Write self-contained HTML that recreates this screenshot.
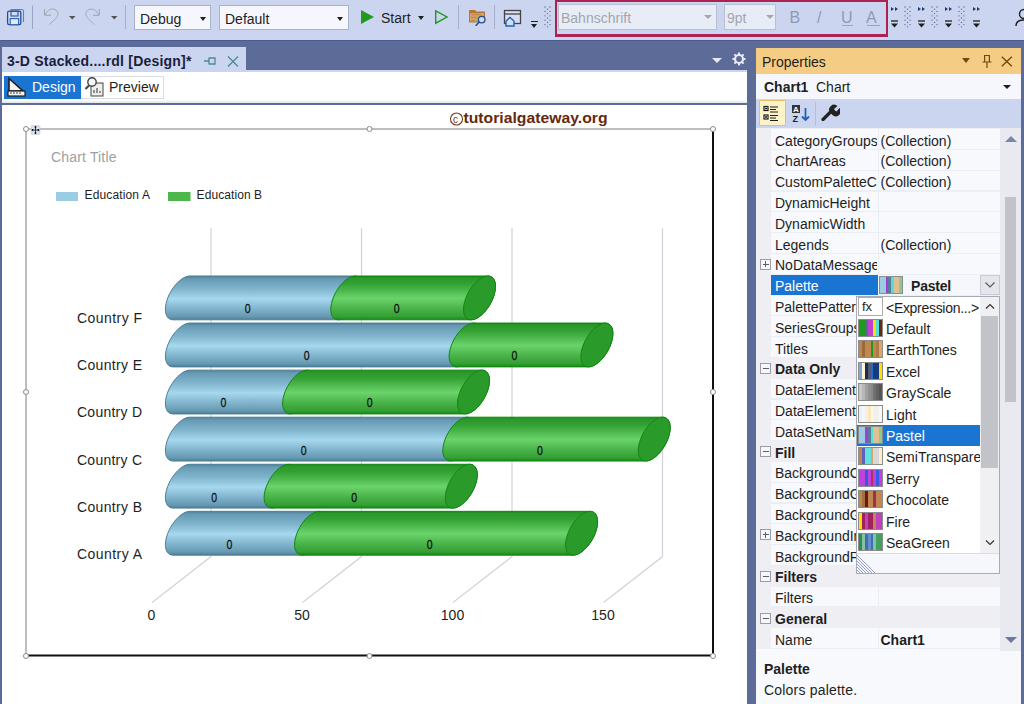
<!DOCTYPE html>
<html><head><meta charset="utf-8">
<style>
*{margin:0;padding:0;box-sizing:border-box}
html,body{width:1024px;height:704px;overflow:hidden;background:#5D6B99;font-family:"Liberation Sans",sans-serif;font-size:14px;color:#1E1E1E}
.a{position:absolute}
#tb{left:0;top:0;width:1024px;height:40px;background:#CCD5F0}
.sep{position:absolute;top:5px;width:1px;height:24px;background:#A6B0CC}
.combo{position:absolute;top:5px;height:25px;background:#F5F7FC;border:1px solid #A9B2CD}
.combo .t{position:absolute;left:5px;top:5px;font-size:14px;color:#1E1E1E}
.dd{position:absolute;width:0;height:0;border-left:4px solid transparent;border-right:4px solid transparent;border-top:4px solid #1E1E1E}
.grip{position:absolute;width:7px}
#doc{left:2px;top:70px;width:745px;height:634px;background:#fff}
#tab{left:2px;top:47px;width:244px;height:25px;background:#CCD5F0}
#props{left:756px;top:48px;width:265px;height:656px;background:#F7F9FD}
.row{position:absolute;left:15px;width:229px;height:21px;border-bottom:1px solid #E6EAF3}
.nm{position:absolute;left:4px;top:2px;font-size:14px;white-space:nowrap;overflow:hidden}
</style></head><body>
<!-- top toolbar -->
<div id="tb" class="a">
 <!-- save icon -->
 <svg class="a" style="left:0;top:0" width="130" height="40" viewBox="0 0 130 40">
  <path d="M10.5 9.5H21.5Q23.5 9.5 23.5 11.5V22" fill="none" stroke="#4F86D0" stroke-width="1.1"/>
  <rect x="7.6" y="11.2" width="13.2" height="13.5" rx="1.6" fill="#D3DBF0" stroke="#1F4E9A" stroke-width="1.3"/>
  <rect x="11" y="11.2" width="7" height="4.8" fill="none" stroke="#1F4E9A" stroke-width="1.1"/>
  <rect x="10.2" y="18.6" width="8.4" height="6.1" fill="#E4E9F5" stroke="#2A5FB0" stroke-width="1.1"/>
  <path d="M32.5 5.5V29" stroke="#9AA5C6" stroke-width="1"/>
  <path d="M44.5 9V15.2H51" fill="none" stroke="#98A0B8" stroke-width="1"/>
  <path d="M45 14.8C47 11 49.5 9 52.5 9C56 9 58 11.5 58 14.2C58 16.8 55 19.5 49.3 24.5" fill="none" stroke="#A8A59E" stroke-width="1"/>
  <path d="M69 16H75.5L72.25 19.5z" fill="#555"/>
  <path d="M99.2 9V15.3H93" fill="none" stroke="#98A0B8" stroke-width="1"/>
  <path d="M98.8 14.8C96.8 11 94.3 9 91.3 9C87.8 9 85.8 11.5 85.8 14.2C85.8 16.8 88.8 19.5 94.5 24.5" fill="none" stroke="#A0AAB0" stroke-width="1"/>
  <path d="M111 16H117.5L114.25 19.5z" fill="#555"/>
 </svg>
 <div class="sep" style="left:125px"></div>
 <div class="combo" style="left:134px;width:77px"><span class="t">Debug</span><div class="dd" style="left:64.5px;top:10.5px;border-left-width:3.5px;border-right-width:3.5px;border-top-width:4px"></div></div>
 <div class="combo" style="left:219px;width:130px"><span class="t">Default</span><div class="dd" style="left:117px;top:10.5px;border-left-width:3.5px;border-right-width:3.5px;border-top-width:4px"></div></div>
 <!-- play -->
 <svg class="a" style="left:360px;top:9px" width="15" height="16" viewBox="0 0 15 16"><path d="M1 1L14 8L1 15z" fill="#1F9A1F"/></svg>
 <span class="a" style="left:381px;top:10px;font-size:14px">Start</span>
 <div class="dd" style="left:417.5px;top:15.5px;border-left-width:3.5px;border-right-width:3.5px;border-top-width:4px"></div>
 <svg class="a" style="left:434px;top:9px" width="15" height="16" viewBox="0 0 15 16"><path d="M1.7 1.8L13 8L1.7 14.2z" fill="none" stroke="#1F9A1F" stroke-width="1.4"/></svg>
 <div class="sep" style="left:458px"></div>
 <!-- folder search -->
 <svg class="a" style="left:468px;top:8px" width="20" height="19" viewBox="0 0 20 19">
  <path d="M1 2h6l1.5 1.5H17v11H1z" fill="#B87432"/>
  <path d="M2 5h14v8.5H2z" fill="#D2A468"/>
  <path d="M3 6l2 1 2-1 2 1 2-1 2 1M3 9l2 1 2-1 2 1M3 12l2 1 2-1" stroke="#B07A40" stroke-width="0.8" fill="none"/>
  <circle cx="13.7" cy="11.6" r="3.3" fill="#D3DBF0" stroke="#1F4E9A" stroke-width="1.3"/>
  <path d="M11.3 14l-3.6 3.8" stroke="#1F4E9A" stroke-width="1.5"/>
 </svg>
 <div class="sep" style="left:494px"></div>
 <!-- window home -->
 <svg class="a" style="left:503px;top:9px" width="20" height="19" viewBox="0 0 20 19">
  <rect x="1.5" y="1.5" width="16" height="13" fill="#D6DDF2" stroke="#444" stroke-width="1.3"/>
  <path d="M1.5 5h16" stroke="#444" stroke-width="1.3"/>
  <path d="M3 12l4-3.5 4 3.5v5H3z" fill="#D6DDF2" stroke="#1F62B8" stroke-width="1.4"/>
 </svg>
 <div class="a" style="left:531px;top:20.5px;width:7px;height:1.2px;background:#1E1E1E"></div>
 <div class="dd" style="left:531px;top:23.5px;border-left-width:3.5px;border-right-width:3.5px;border-top-width:4px"></div>
 <div class="grip" style="left:544px;top:6px;height:22px"><svg width="7" height="22" viewBox="0 0 7 22" fill="#56638F"><circle cx="1" cy="1.0" r="0.65"/><circle cx="6" cy="1.0" r="0.65"/><circle cx="3.5" cy="3.2" r="0.65"/><circle cx="1" cy="5.4" r="0.65"/><circle cx="6" cy="5.4" r="0.65"/><circle cx="3.5" cy="7.6" r="0.65"/><circle cx="1" cy="9.8" r="0.65"/><circle cx="6" cy="9.8" r="0.65"/><circle cx="3.5" cy="12.0" r="0.65"/><circle cx="1" cy="14.2" r="0.65"/><circle cx="6" cy="14.2" r="0.65"/><circle cx="3.5" cy="16.4" r="0.65"/><circle cx="1" cy="18.6" r="0.65"/><circle cx="6" cy="18.6" r="0.65"/><circle cx="3.5" cy="20.8" r="0.65"/></svg></div>
 <!-- red box -->
 <div class="a" style="left:555px;top:0;width:333px;height:37px;border:2.8px solid #AC2352;border-bottom-width:3px"></div>
 <div class="combo" style="left:558px;top:4px;height:26px;width:159px;border-color:#B9BFCF;background:#E8ECF6"><span class="t" style="left:2px;color:#A3A6AE">Bahnschrift</span><div class="dd" style="left:145px;top:10px;border-top-color:#A3A6AE"></div></div>
 <div class="combo" style="left:724px;top:4px;height:26px;width:52px;border-color:#B9BFCF;background:#E8ECF6"><span class="t" style="left:2px;color:#A3A6AE">9pt</span><div class="dd" style="left:41px;top:10px;border-top-color:#A3A6AE"></div></div>

 <!-- alignment groups -->
 <svg class="a" style="left:888px;top:4px" width="100" height="26" viewBox="0 0 100 26">
  <g id="ag">
   <path d="M3 3l3 2-3 2zM7 3l3 2-3 2z" fill="#1E3A7A"/>
   <path d="M3 17h7" stroke="#1E1E1E" stroke-width="1.3"/>
   <path d="M3 19.5h7l-3.5 4z" fill="#1E1E1E"/>
  </g>
  <use href="#ag" x="27"/><use href="#ag" x="54"/><use href="#ag" x="82"/>
 </svg>
 <div class="grip" style="left:904px;top:6px;height:22px"><svg width="7" height="22" viewBox="0 0 7 22" fill="#56638F"><circle cx="1" cy="1.0" r="0.65"/><circle cx="6" cy="1.0" r="0.65"/><circle cx="3.5" cy="3.2" r="0.65"/><circle cx="1" cy="5.4" r="0.65"/><circle cx="6" cy="5.4" r="0.65"/><circle cx="3.5" cy="7.6" r="0.65"/><circle cx="1" cy="9.8" r="0.65"/><circle cx="6" cy="9.8" r="0.65"/><circle cx="3.5" cy="12.0" r="0.65"/><circle cx="1" cy="14.2" r="0.65"/><circle cx="6" cy="14.2" r="0.65"/><circle cx="3.5" cy="16.4" r="0.65"/><circle cx="1" cy="18.6" r="0.65"/><circle cx="6" cy="18.6" r="0.65"/><circle cx="3.5" cy="20.8" r="0.65"/></svg></div>
 <div class="grip" style="left:931px;top:6px;height:22px"><svg width="7" height="22" viewBox="0 0 7 22" fill="#56638F"><circle cx="1" cy="1.0" r="0.65"/><circle cx="6" cy="1.0" r="0.65"/><circle cx="3.5" cy="3.2" r="0.65"/><circle cx="1" cy="5.4" r="0.65"/><circle cx="6" cy="5.4" r="0.65"/><circle cx="3.5" cy="7.6" r="0.65"/><circle cx="1" cy="9.8" r="0.65"/><circle cx="6" cy="9.8" r="0.65"/><circle cx="3.5" cy="12.0" r="0.65"/><circle cx="1" cy="14.2" r="0.65"/><circle cx="6" cy="14.2" r="0.65"/><circle cx="3.5" cy="16.4" r="0.65"/><circle cx="1" cy="18.6" r="0.65"/><circle cx="6" cy="18.6" r="0.65"/><circle cx="3.5" cy="20.8" r="0.65"/></svg></div>
 <div class="grip" style="left:958px;top:6px;height:22px"><svg width="7" height="22" viewBox="0 0 7 22" fill="#56638F"><circle cx="1" cy="1.0" r="0.65"/><circle cx="6" cy="1.0" r="0.65"/><circle cx="3.5" cy="3.2" r="0.65"/><circle cx="1" cy="5.4" r="0.65"/><circle cx="6" cy="5.4" r="0.65"/><circle cx="3.5" cy="7.6" r="0.65"/><circle cx="1" cy="9.8" r="0.65"/><circle cx="6" cy="9.8" r="0.65"/><circle cx="3.5" cy="12.0" r="0.65"/><circle cx="1" cy="14.2" r="0.65"/><circle cx="6" cy="14.2" r="0.65"/><circle cx="3.5" cy="16.4" r="0.65"/><circle cx="1" cy="18.6" r="0.65"/><circle cx="6" cy="18.6" r="0.65"/><circle cx="3.5" cy="20.8" r="0.65"/></svg></div>
 <svg class="a" style="left:1014px;top:8px" width="10" height="20" viewBox="0 0 10 20">
  <circle cx="10" cy="6" r="4.5" fill="none" stroke="#1E1E1E" stroke-width="1.4"/>
  <path d="M2 18c0-4 3-6 8-6" fill="none" stroke="#1E1E1E" stroke-width="1.4"/>
 </svg>
 <span class="a" style="left:789.5px;top:9px;font-size:16px;color:#8E9AB5">B</span>
 <span class="a" style="left:817px;top:9px;font-size:16px;color:#8E9AB5">/</span>
 <span class="a" style="left:841px;top:9px;font-size:16px;color:#8E9AB5">U</span>
 <div class="a" style="left:841.5px;top:24.5px;width:11px;height:1.2px;background:#9AA4BC"></div>
 <span class="a" style="left:866px;top:9px;font-size:16px;color:#8E9AB5">A</span>
 <div class="a" style="left:866.5px;top:24.5px;width:13px;height:1.2px;background:#9AA4BC"></div>
</div>
</div>
<div class="a" style="left:0;top:40px;width:1024px;height:1px;background:#4B5A8E"></div>
<!-- doc tab -->
<div id="tab" class="a">
 <span class="a" style="left:5px;top:5.5px;font-size:14px;font-weight:bold;color:#1B1E3C;letter-spacing:0.2px;white-space:nowrap">3-D Stacked....rdl [Design]*</span>
 <svg class="a" style="left:201px;top:56px;top:9px" width="14" height="10" viewBox="0 0 14 10">
  <path d="M1 5h5M6 1.5v7M6 2h6v6H6" fill="none" stroke="#4A8A96" stroke-width="1.3"/>
 </svg>
 <svg class="a" style="left:224.5px;top:8.5px" width="12" height="11" viewBox="0 0 12 11"><path d="M1 0.5l10 10M11 0.5l-10 10" stroke="#4A8A96" stroke-width="1.3"/></svg>
</div>
<!-- tab well icons -->
<div class="a" style="left:712px;top:58px;width:0;height:0;border-left:5px solid transparent;border-right:5px solid transparent;border-top:5px solid #E6EAF6"></div>
<svg class="a" style="left:732px;top:52px" width="14" height="14" viewBox="0 0 14 14">
 <circle cx="7" cy="7" r="4" fill="none" stroke="#E6EAF6" stroke-width="2.2"/>
 <path d="M7 0.5v3M7 10.5v3M0.5 7h3M10.5 7h3M2.4 2.4l2.1 2.1M9.5 9.5l2.1 2.1M2.4 11.6l2.1-2.1M9.5 4.5l2.1-2.1" stroke="#E6EAF6" stroke-width="2"/>
</svg>
<div id="doc" class="a">
 <div class="a" style="left:0;top:0;width:745px;height:2px;background:#CCD5F0"></div>
 <!-- design button -->
 <div class="a" style="left:2px;top:5.5px;width:77px;height:23px;background:#1A74D2"></div>
 <svg class="a" style="left:5px;top:7px" width="20" height="20" viewBox="0 0 20 20">
  <path d="M2 1.5L16 14H2z" fill="#F3F3F3" stroke="#1E1E1E" stroke-width="1.6"/>
  <rect x="1" y="14" width="17" height="5" fill="#F3F3F3" stroke="#1E1E1E" stroke-width="1.2"/>
  <path d="M4 15v2M7 15v2M10 15v2M13 15v2" stroke="#1E1E1E" stroke-width="0.8"/>
 </svg>
 <span class="a" style="left:30px;top:9px;font-size:14px;color:#fff">Design</span>
 <div class="a" style="left:79px;top:5.5px;width:83px;height:23px;background:#fff;border:1px solid #D7DCE8;border-left:none"></div>
 <svg class="a" style="left:82px;top:6px" width="21" height="21" viewBox="0 0 21 21">
  <rect x="7" y="7" width="12" height="13" fill="#EDEDED" stroke="#555" stroke-width="1.1"/>
  <path d="M10 17v-3M13 17v-5M16 17v-2" stroke="#333" stroke-width="1"/>
  <circle cx="8" cy="6" r="4.2" fill="#F5F5F5" stroke="#444" stroke-width="1.4"/>
  <path d="M5 9.5l-3.5 3.5" stroke="#444" stroke-width="2.2"/>
 </svg>
 <span class="a" style="left:107px;top:9px;font-size:14px;color:#1E1E1E">Preview</span>
 <div class="a" style="left:0;top:29.5px;width:745px;height:3.3px;background:linear-gradient(#fff,#E0E3EA)"></div>
 <div class="a" style="left:0;top:32.8px;width:745px;height:2.4px;background:#5D6B99"></div>
</div>
<!--CHART-->
<svg class="a" style="left:0;top:0" width="747" height="704" viewBox="0 0 747 704">
<defs>
<linearGradient id="gb0" gradientUnits="userSpaceOnUse" x1="0" y1="276.00" x2="0" y2="319.80"><stop offset="0" stop-color="#4C7F96"/><stop offset="0.06" stop-color="#679AB2"/><stop offset="0.3" stop-color="#80B5CD"/><stop offset="0.52" stop-color="#A6D8EE"/><stop offset="0.75" stop-color="#80B4CC"/><stop offset="0.93" stop-color="#6699B1"/><stop offset="1" stop-color="#4C7F96"/></linearGradient>
<linearGradient id="gg0" gradientUnits="userSpaceOnUse" x1="0" y1="276.00" x2="0" y2="319.80"><stop offset="0" stop-color="#168C16"/><stop offset="0.05" stop-color="#2C982C"/><stop offset="0.17" stop-color="#33A033"/><stop offset="0.32" stop-color="#4AB64A"/><stop offset="0.51" stop-color="#6AD46A"/><stop offset="0.6" stop-color="#5EC85E"/><stop offset="0.77" stop-color="#46B046"/><stop offset="0.92" stop-color="#35A035"/><stop offset="1" stop-color="#168C16"/></linearGradient>
<linearGradient id="gb1" gradientUnits="userSpaceOnUse" x1="0" y1="323.07" x2="0" y2="366.87"><stop offset="0" stop-color="#4C7F96"/><stop offset="0.06" stop-color="#679AB2"/><stop offset="0.3" stop-color="#80B5CD"/><stop offset="0.52" stop-color="#A6D8EE"/><stop offset="0.75" stop-color="#80B4CC"/><stop offset="0.93" stop-color="#6699B1"/><stop offset="1" stop-color="#4C7F96"/></linearGradient>
<linearGradient id="gg1" gradientUnits="userSpaceOnUse" x1="0" y1="323.07" x2="0" y2="366.87"><stop offset="0" stop-color="#168C16"/><stop offset="0.05" stop-color="#2C982C"/><stop offset="0.17" stop-color="#33A033"/><stop offset="0.32" stop-color="#4AB64A"/><stop offset="0.51" stop-color="#6AD46A"/><stop offset="0.6" stop-color="#5EC85E"/><stop offset="0.77" stop-color="#46B046"/><stop offset="0.92" stop-color="#35A035"/><stop offset="1" stop-color="#168C16"/></linearGradient>
<linearGradient id="gb2" gradientUnits="userSpaceOnUse" x1="0" y1="370.14" x2="0" y2="413.94"><stop offset="0" stop-color="#4C7F96"/><stop offset="0.06" stop-color="#679AB2"/><stop offset="0.3" stop-color="#80B5CD"/><stop offset="0.52" stop-color="#A6D8EE"/><stop offset="0.75" stop-color="#80B4CC"/><stop offset="0.93" stop-color="#6699B1"/><stop offset="1" stop-color="#4C7F96"/></linearGradient>
<linearGradient id="gg2" gradientUnits="userSpaceOnUse" x1="0" y1="370.14" x2="0" y2="413.94"><stop offset="0" stop-color="#168C16"/><stop offset="0.05" stop-color="#2C982C"/><stop offset="0.17" stop-color="#33A033"/><stop offset="0.32" stop-color="#4AB64A"/><stop offset="0.51" stop-color="#6AD46A"/><stop offset="0.6" stop-color="#5EC85E"/><stop offset="0.77" stop-color="#46B046"/><stop offset="0.92" stop-color="#35A035"/><stop offset="1" stop-color="#168C16"/></linearGradient>
<linearGradient id="gb3" gradientUnits="userSpaceOnUse" x1="0" y1="417.21" x2="0" y2="461.01"><stop offset="0" stop-color="#4C7F96"/><stop offset="0.06" stop-color="#679AB2"/><stop offset="0.3" stop-color="#80B5CD"/><stop offset="0.52" stop-color="#A6D8EE"/><stop offset="0.75" stop-color="#80B4CC"/><stop offset="0.93" stop-color="#6699B1"/><stop offset="1" stop-color="#4C7F96"/></linearGradient>
<linearGradient id="gg3" gradientUnits="userSpaceOnUse" x1="0" y1="417.21" x2="0" y2="461.01"><stop offset="0" stop-color="#168C16"/><stop offset="0.05" stop-color="#2C982C"/><stop offset="0.17" stop-color="#33A033"/><stop offset="0.32" stop-color="#4AB64A"/><stop offset="0.51" stop-color="#6AD46A"/><stop offset="0.6" stop-color="#5EC85E"/><stop offset="0.77" stop-color="#46B046"/><stop offset="0.92" stop-color="#35A035"/><stop offset="1" stop-color="#168C16"/></linearGradient>
<linearGradient id="gb4" gradientUnits="userSpaceOnUse" x1="0" y1="464.28" x2="0" y2="508.08"><stop offset="0" stop-color="#4C7F96"/><stop offset="0.06" stop-color="#679AB2"/><stop offset="0.3" stop-color="#80B5CD"/><stop offset="0.52" stop-color="#A6D8EE"/><stop offset="0.75" stop-color="#80B4CC"/><stop offset="0.93" stop-color="#6699B1"/><stop offset="1" stop-color="#4C7F96"/></linearGradient>
<linearGradient id="gg4" gradientUnits="userSpaceOnUse" x1="0" y1="464.28" x2="0" y2="508.08"><stop offset="0" stop-color="#168C16"/><stop offset="0.05" stop-color="#2C982C"/><stop offset="0.17" stop-color="#33A033"/><stop offset="0.32" stop-color="#4AB64A"/><stop offset="0.51" stop-color="#6AD46A"/><stop offset="0.6" stop-color="#5EC85E"/><stop offset="0.77" stop-color="#46B046"/><stop offset="0.92" stop-color="#35A035"/><stop offset="1" stop-color="#168C16"/></linearGradient>
<linearGradient id="gb5" gradientUnits="userSpaceOnUse" x1="0" y1="511.35" x2="0" y2="555.15"><stop offset="0" stop-color="#4C7F96"/><stop offset="0.06" stop-color="#679AB2"/><stop offset="0.3" stop-color="#80B5CD"/><stop offset="0.52" stop-color="#A6D8EE"/><stop offset="0.75" stop-color="#80B4CC"/><stop offset="0.93" stop-color="#6699B1"/><stop offset="1" stop-color="#4C7F96"/></linearGradient>
<linearGradient id="gg5" gradientUnits="userSpaceOnUse" x1="0" y1="511.35" x2="0" y2="555.15"><stop offset="0" stop-color="#168C16"/><stop offset="0.05" stop-color="#2C982C"/><stop offset="0.17" stop-color="#33A033"/><stop offset="0.32" stop-color="#4AB64A"/><stop offset="0.51" stop-color="#6AD46A"/><stop offset="0.6" stop-color="#5EC85E"/><stop offset="0.77" stop-color="#46B046"/><stop offset="0.92" stop-color="#35A035"/><stop offset="1" stop-color="#168C16"/></linearGradient>
</defs>
<path d="M26 129H713M26 129V656" stroke="#A9A9A9" stroke-width="1.5" fill="none"/>
<path d="M713 130V656M26 655.5H714" stroke="#111" stroke-width="2" fill="none"/>
<circle cx="456.5" cy="119" r="6" fill="none" stroke="#7A3A1A" stroke-width="1.1"/><text x="453" y="123" font-family="Liberation Sans" font-size="10" fill="#7A3A1A">c</text>
<text x="463.5" y="123.3" font-family="Liberation Sans" font-weight="bold" font-size="14.5" fill="#66280C" textLength="144" lengthAdjust="spacingAndGlyphs">tutorialgateway.org</text>
<text x="51" y="162.3" font-family="Liberation Sans" font-size="14" fill="#A0A0A0" textLength="65.5" lengthAdjust="spacing">Chart Title</text>
<rect x="56" y="192" width="22" height="9" fill="#9ACDE3"/><rect x="168" y="192" width="22.5" height="9" fill="#4CB84C"/>
<text x="84.5" y="199.3" font-family="Liberation Sans" font-size="12" fill="#1E1E1E" textLength="65.5" lengthAdjust="spacing">Education A</text>
<text x="196.6" y="199.3" font-family="Liberation Sans" font-size="12" fill="#1E1E1E" textLength="65.5" lengthAdjust="spacing">Education B</text>
<path d="M211.0 228V556.6L152.0 602.5" stroke="#D4D4DC" stroke-width="1.3" fill="none"/>
<text x="151.5" y="619.7" text-anchor="middle" font-family="Liberation Sans" font-size="14" fill="#1E1E1E">0</text>
<path d="M361.5 228V556.6L302.5 602.5" stroke="#D4D4DC" stroke-width="1.3" fill="none"/>
<text x="302.0" y="619.7" text-anchor="middle" font-family="Liberation Sans" font-size="14" fill="#1E1E1E">50</text>
<path d="M512.0 228V556.6L453.0 602.5" stroke="#D4D4DC" stroke-width="1.3" fill="none"/>
<text x="452.5" y="619.7" text-anchor="middle" font-family="Liberation Sans" font-size="14" fill="#1E1E1E">100</text>
<path d="M662.5 228V556.6L603.5 602.5" stroke="#D4D4DC" stroke-width="1.3" fill="none"/>
<text x="603.0" y="619.7" text-anchor="middle" font-family="Liberation Sans" font-size="14" fill="#1E1E1E">150</text>
<path d="M189.80 275.99 L355.20 275.99 L356.90 276.18 L358.44 276.74 L359.77 277.66 L360.88 278.92 L361.75 280.52 L362.37 282.41 L362.72 284.56 L362.79 286.94 L362.60 289.52 L362.13 292.23 L361.40 295.04 L360.42 297.90 L359.21 300.76 L357.78 303.57 L356.17 306.28 L354.40 308.86 L352.49 311.24 L350.49 313.39 L348.43 315.28 L346.34 316.88 L344.25 318.14 L342.21 319.06 L340.25 319.62 L338.40 319.81 L173.00 319.81 L171.30 319.62 L169.76 319.06 L168.43 318.14 L167.32 316.88 L166.45 315.28 L165.83 313.39 L165.48 311.24 L165.41 308.86 L165.60 306.28 L166.07 303.57 L166.80 300.76 L167.78 297.90 L168.99 295.04 L170.42 292.23 L172.03 289.52 L173.80 286.94 L175.71 284.56 L177.71 282.41 L179.77 280.52 L181.86 278.92 L183.95 277.66 L185.99 276.74 L187.95 276.18 L189.80 275.99 Z" fill="url(#gb0)" stroke="#4C7F96" stroke-width="1"/>
<path d="M355.20 275.99 L487.90 275.99 L489.60 276.18 L491.14 276.74 L492.47 277.66 L493.58 278.92 L494.45 280.52 L495.07 282.41 L495.42 284.56 L495.49 286.94 L495.30 289.52 L494.83 292.23 L494.10 295.04 L493.12 297.90 L491.91 300.76 L490.48 303.57 L488.87 306.28 L487.10 308.86 L485.19 311.24 L483.19 313.39 L481.13 315.28 L479.04 316.88 L476.95 318.14 L474.91 319.06 L472.95 319.62 L471.10 319.81 L338.40 319.81 L336.70 319.62 L335.16 319.06 L333.83 318.14 L332.72 316.88 L331.85 315.28 L331.23 313.39 L330.88 311.24 L330.81 308.86 L331.00 306.28 L331.47 303.57 L332.20 300.76 L333.18 297.90 L334.39 295.04 L335.82 292.23 L337.43 289.52 L339.20 286.94 L341.11 284.56 L343.11 282.41 L345.17 280.52 L347.26 278.92 L349.35 277.66 L351.39 276.74 L353.35 276.18 L355.20 275.99 Z" fill="url(#gg0)" stroke="#0E880E" stroke-width="1"/>
<path d="M479.50 316.55 L481.59 314.89 L483.64 312.94 L485.62 310.73 L487.50 308.30 L489.24 305.70 L490.81 302.96 L492.19 300.13 L493.36 297.27 L494.28 294.41 L494.95 291.62 L495.36 288.93 L495.50 286.40 L495.36 284.06 L494.95 281.96 L494.28 280.14 L493.36 278.62 L492.19 277.42 L490.81 276.58 L489.24 276.10 L487.50 276.00 L485.62 276.27 L483.64 276.91 L481.59 277.91 L479.50 279.25 L477.41 280.91 L475.36 282.86 L473.38 285.07 L471.50 287.50 L469.76 290.10 L468.19 292.84 L466.81 295.67 L465.64 298.53 L464.72 301.39 L464.05 304.18 L463.64 306.87 L463.50 309.40 L463.64 311.74 L464.05 313.84 L464.72 315.66 L465.64 317.18 L466.81 318.38 L468.19 319.22 L469.76 319.70 L471.50 319.80 L473.38 319.53 L475.36 318.89 L477.41 317.89 Z" fill="#2A9A2A" stroke="#0E880E" stroke-width="1"/>
<text x="247.6" y="313.4" text-anchor="middle" font-family="Liberation Sans" font-size="13.5" fill="#111" stroke="#111" stroke-width="0.3" transform="translate(247.6 0) scale(0.78 1) translate(-247.6 0)">0</text>
<text x="396.6" y="313.4" text-anchor="middle" font-family="Liberation Sans" font-size="13.5" fill="#111" stroke="#111" stroke-width="0.3" transform="translate(396.6 0) scale(0.78 1) translate(-396.6 0)">0</text>
<text x="77" y="323.3" font-family="Liberation Sans" font-size="14" fill="#1E1E1E" textLength="65" lengthAdjust="spacing">Country F</text>
<path d="M189.80 323.06 L473.50 323.06 L475.20 323.25 L476.74 323.81 L478.07 324.73 L479.18 325.99 L480.05 327.59 L480.67 329.48 L481.02 331.63 L481.09 334.01 L480.90 336.59 L480.43 339.30 L479.70 342.11 L478.72 344.97 L477.51 347.83 L476.08 350.64 L474.47 353.35 L472.70 355.93 L470.79 358.31 L468.79 360.46 L466.73 362.35 L464.64 363.95 L462.55 365.21 L460.51 366.13 L458.55 366.69 L456.70 366.88 L173.00 366.88 L171.30 366.69 L169.76 366.13 L168.43 365.21 L167.32 363.95 L166.45 362.35 L165.83 360.46 L165.48 358.31 L165.41 355.93 L165.60 353.35 L166.07 350.64 L166.80 347.83 L167.78 344.97 L168.99 342.11 L170.42 339.30 L172.03 336.59 L173.80 334.01 L175.71 331.63 L177.71 329.48 L179.77 327.59 L181.86 325.99 L183.95 324.73 L185.99 323.81 L187.95 323.25 L189.80 323.06 Z" fill="url(#gb1)" stroke="#4C7F96" stroke-width="1"/>
<path d="M473.50 323.06 L605.30 323.06 L607.00 323.25 L608.54 323.81 L609.87 324.73 L610.98 325.99 L611.85 327.59 L612.47 329.48 L612.82 331.63 L612.89 334.01 L612.70 336.59 L612.23 339.30 L611.50 342.11 L610.52 344.97 L609.31 347.83 L607.88 350.64 L606.27 353.35 L604.50 355.93 L602.59 358.31 L600.59 360.46 L598.53 362.35 L596.44 363.95 L594.35 365.21 L592.31 366.13 L590.35 366.69 L588.50 366.88 L456.70 366.88 L455.00 366.69 L453.46 366.13 L452.13 365.21 L451.02 363.95 L450.15 362.35 L449.53 360.46 L449.18 358.31 L449.11 355.93 L449.30 353.35 L449.77 350.64 L450.50 347.83 L451.48 344.97 L452.69 342.11 L454.12 339.30 L455.73 336.59 L457.50 334.01 L459.41 331.63 L461.41 329.48 L463.47 327.59 L465.56 325.99 L467.65 324.73 L469.69 323.81 L471.65 323.25 L473.50 323.06 Z" fill="url(#gg1)" stroke="#0E880E" stroke-width="1"/>
<path d="M596.90 363.62 L598.99 361.96 L601.04 360.01 L603.02 357.80 L604.90 355.37 L606.64 352.77 L608.21 350.03 L609.59 347.20 L610.76 344.34 L611.68 341.48 L612.35 338.69 L612.76 336.00 L612.90 333.47 L612.76 331.13 L612.35 329.03 L611.68 327.21 L610.76 325.69 L609.59 324.49 L608.21 323.65 L606.64 323.17 L604.90 323.07 L603.02 323.34 L601.04 323.98 L598.99 324.98 L596.90 326.32 L594.81 327.98 L592.76 329.93 L590.78 332.14 L588.90 334.57 L587.16 337.17 L585.59 339.91 L584.21 342.74 L583.04 345.60 L582.12 348.46 L581.45 351.25 L581.04 353.94 L580.90 356.47 L581.04 358.81 L581.45 360.91 L582.12 362.73 L583.04 364.25 L584.21 365.45 L585.59 366.29 L587.16 366.77 L588.90 366.87 L590.78 366.60 L592.76 365.96 L594.81 364.96 Z" fill="#2A9A2A" stroke="#0E880E" stroke-width="1"/>
<text x="306.8" y="360.5" text-anchor="middle" font-family="Liberation Sans" font-size="13.5" fill="#111" stroke="#111" stroke-width="0.3" transform="translate(306.8 0) scale(0.78 1) translate(-306.8 0)">0</text>
<text x="514.5" y="360.5" text-anchor="middle" font-family="Liberation Sans" font-size="13.5" fill="#111" stroke="#111" stroke-width="0.3" transform="translate(514.5 0) scale(0.78 1) translate(-514.5 0)">0</text>
<text x="77" y="370.4" font-family="Liberation Sans" font-size="14" fill="#1E1E1E" textLength="65" lengthAdjust="spacing">Country E</text>
<path d="M189.80 370.13 L307.00 370.13 L308.70 370.32 L310.24 370.88 L311.57 371.80 L312.68 373.06 L313.55 374.66 L314.17 376.55 L314.52 378.70 L314.59 381.08 L314.40 383.66 L313.93 386.37 L313.20 389.18 L312.22 392.04 L311.01 394.90 L309.58 397.71 L307.97 400.42 L306.20 403.00 L304.29 405.38 L302.29 407.53 L300.23 409.42 L298.14 411.02 L296.05 412.28 L294.01 413.20 L292.05 413.76 L290.20 413.95 L173.00 413.95 L171.30 413.76 L169.76 413.20 L168.43 412.28 L167.32 411.02 L166.45 409.42 L165.83 407.53 L165.48 405.38 L165.41 403.00 L165.60 400.42 L166.07 397.71 L166.80 394.90 L167.78 392.04 L168.99 389.18 L170.42 386.37 L172.03 383.66 L173.80 381.08 L175.71 378.70 L177.71 376.55 L179.77 374.66 L181.86 373.06 L183.95 371.80 L185.99 370.88 L187.95 370.32 L189.80 370.13 Z" fill="url(#gb2)" stroke="#4C7F96" stroke-width="1"/>
<path d="M307.00 370.13 L481.90 370.13 L483.60 370.32 L485.14 370.88 L486.47 371.80 L487.58 373.06 L488.45 374.66 L489.07 376.55 L489.42 378.70 L489.49 381.08 L489.30 383.66 L488.83 386.37 L488.10 389.18 L487.12 392.04 L485.91 394.90 L484.48 397.71 L482.87 400.42 L481.10 403.00 L479.19 405.38 L477.19 407.53 L475.13 409.42 L473.04 411.02 L470.95 412.28 L468.91 413.20 L466.95 413.76 L465.10 413.95 L290.20 413.95 L288.50 413.76 L286.96 413.20 L285.63 412.28 L284.52 411.02 L283.65 409.42 L283.03 407.53 L282.68 405.38 L282.61 403.00 L282.80 400.42 L283.27 397.71 L284.00 394.90 L284.98 392.04 L286.19 389.18 L287.62 386.37 L289.23 383.66 L291.00 381.08 L292.91 378.70 L294.91 376.55 L296.97 374.66 L299.06 373.06 L301.15 371.80 L303.19 370.88 L305.15 370.32 L307.00 370.13 Z" fill="url(#gg2)" stroke="#0E880E" stroke-width="1"/>
<path d="M473.50 410.69 L475.59 409.03 L477.64 407.08 L479.62 404.87 L481.50 402.44 L483.24 399.84 L484.81 397.10 L486.19 394.27 L487.36 391.41 L488.28 388.55 L488.95 385.76 L489.36 383.07 L489.50 380.54 L489.36 378.20 L488.95 376.10 L488.28 374.28 L487.36 372.76 L486.19 371.56 L484.81 370.72 L483.24 370.24 L481.50 370.14 L479.62 370.41 L477.64 371.05 L475.59 372.05 L473.50 373.39 L471.41 375.05 L469.36 377.00 L467.38 379.21 L465.50 381.64 L463.76 384.24 L462.19 386.98 L460.81 389.81 L459.64 392.67 L458.72 395.53 L458.05 398.32 L457.64 401.01 L457.50 403.54 L457.64 405.88 L458.05 407.98 L458.72 409.80 L459.64 411.32 L460.81 412.52 L462.19 413.36 L463.76 413.84 L465.50 413.94 L467.38 413.67 L469.36 413.03 L471.41 412.03 Z" fill="#2A9A2A" stroke="#0E880E" stroke-width="1"/>
<text x="223.5" y="407.5" text-anchor="middle" font-family="Liberation Sans" font-size="13.5" fill="#111" stroke="#111" stroke-width="0.3" transform="translate(223.5 0) scale(0.78 1) translate(-223.5 0)">0</text>
<text x="369.6" y="407.5" text-anchor="middle" font-family="Liberation Sans" font-size="13.5" fill="#111" stroke="#111" stroke-width="0.3" transform="translate(369.6 0) scale(0.78 1) translate(-369.6 0)">0</text>
<text x="77" y="417.4" font-family="Liberation Sans" font-size="14" fill="#1E1E1E" textLength="65" lengthAdjust="spacing">Country D</text>
<path d="M189.80 417.20 L467.20 417.20 L468.90 417.39 L470.44 417.95 L471.77 418.87 L472.88 420.13 L473.75 421.73 L474.37 423.62 L474.72 425.77 L474.79 428.15 L474.60 430.73 L474.13 433.44 L473.40 436.25 L472.42 439.11 L471.21 441.97 L469.78 444.78 L468.17 447.49 L466.40 450.07 L464.49 452.45 L462.49 454.60 L460.43 456.49 L458.34 458.09 L456.25 459.35 L454.21 460.27 L452.25 460.83 L450.40 461.02 L173.00 461.02 L171.30 460.83 L169.76 460.27 L168.43 459.35 L167.32 458.09 L166.45 456.49 L165.83 454.60 L165.48 452.45 L165.41 450.07 L165.60 447.49 L166.07 444.78 L166.80 441.97 L167.78 439.11 L168.99 436.25 L170.42 433.44 L172.03 430.73 L173.80 428.15 L175.71 425.77 L177.71 423.62 L179.77 421.73 L181.86 420.13 L183.95 418.87 L185.99 417.95 L187.95 417.39 L189.80 417.20 Z" fill="url(#gb3)" stroke="#4C7F96" stroke-width="1"/>
<path d="M467.20 417.20 L662.60 417.20 L664.30 417.39 L665.84 417.95 L667.17 418.87 L668.28 420.13 L669.15 421.73 L669.77 423.62 L670.12 425.77 L670.19 428.15 L670.00 430.73 L669.53 433.44 L668.80 436.25 L667.82 439.11 L666.61 441.97 L665.18 444.78 L663.57 447.49 L661.80 450.07 L659.89 452.45 L657.89 454.60 L655.83 456.49 L653.74 458.09 L651.65 459.35 L649.61 460.27 L647.65 460.83 L645.80 461.02 L450.40 461.02 L448.70 460.83 L447.16 460.27 L445.83 459.35 L444.72 458.09 L443.85 456.49 L443.23 454.60 L442.88 452.45 L442.81 450.07 L443.00 447.49 L443.47 444.78 L444.20 441.97 L445.18 439.11 L446.39 436.25 L447.82 433.44 L449.43 430.73 L451.20 428.15 L453.11 425.77 L455.11 423.62 L457.17 421.73 L459.26 420.13 L461.35 418.87 L463.39 417.95 L465.35 417.39 L467.20 417.20 Z" fill="url(#gg3)" stroke="#0E880E" stroke-width="1"/>
<path d="M654.20 457.76 L656.29 456.10 L658.34 454.15 L660.32 451.94 L662.20 449.51 L663.94 446.91 L665.51 444.17 L666.89 441.34 L668.06 438.48 L668.98 435.62 L669.65 432.83 L670.06 430.14 L670.20 427.61 L670.06 425.27 L669.65 423.17 L668.98 421.35 L668.06 419.83 L666.89 418.63 L665.51 417.79 L663.94 417.31 L662.20 417.21 L660.32 417.48 L658.34 418.12 L656.29 419.12 L654.20 420.46 L652.11 422.12 L650.06 424.07 L648.08 426.28 L646.20 428.71 L644.46 431.31 L642.89 434.05 L641.51 436.88 L640.34 439.74 L639.42 442.60 L638.75 445.39 L638.34 448.08 L638.20 450.61 L638.34 452.95 L638.75 455.05 L639.42 456.87 L640.34 458.39 L641.51 459.59 L642.89 460.43 L644.46 460.91 L646.20 461.01 L648.08 460.74 L650.06 460.10 L652.11 459.10 Z" fill="#2A9A2A" stroke="#0E880E" stroke-width="1"/>
<text x="303.6" y="454.6" text-anchor="middle" font-family="Liberation Sans" font-size="13.5" fill="#111" stroke="#111" stroke-width="0.3" transform="translate(303.6 0) scale(0.78 1) translate(-303.6 0)">0</text>
<text x="540.0" y="454.6" text-anchor="middle" font-family="Liberation Sans" font-size="13.5" fill="#111" stroke="#111" stroke-width="0.3" transform="translate(540.0 0) scale(0.78 1) translate(-540.0 0)">0</text>
<text x="77" y="464.5" font-family="Liberation Sans" font-size="14" fill="#1E1E1E" textLength="65" lengthAdjust="spacing">Country C</text>
<path d="M189.80 464.27 L288.50 464.27 L290.20 464.46 L291.74 465.02 L293.07 465.94 L294.18 467.20 L295.05 468.80 L295.67 470.69 L296.02 472.84 L296.09 475.22 L295.90 477.80 L295.43 480.51 L294.70 483.32 L293.72 486.18 L292.51 489.04 L291.08 491.85 L289.47 494.56 L287.70 497.14 L285.79 499.52 L283.79 501.67 L281.73 503.56 L279.64 505.16 L277.55 506.42 L275.51 507.34 L273.55 507.90 L271.70 508.09 L173.00 508.09 L171.30 507.90 L169.76 507.34 L168.43 506.42 L167.32 505.16 L166.45 503.56 L165.83 501.67 L165.48 499.52 L165.41 497.14 L165.60 494.56 L166.07 491.85 L166.80 489.04 L167.78 486.18 L168.99 483.32 L170.42 480.51 L172.03 477.80 L173.80 475.22 L175.71 472.84 L177.71 470.69 L179.77 468.80 L181.86 467.20 L183.95 465.94 L185.99 465.02 L187.95 464.46 L189.80 464.27 Z" fill="url(#gb4)" stroke="#4C7F96" stroke-width="1"/>
<path d="M288.50 464.27 L469.70 464.27 L471.40 464.46 L472.94 465.02 L474.27 465.94 L475.38 467.20 L476.25 468.80 L476.87 470.69 L477.22 472.84 L477.29 475.22 L477.10 477.80 L476.63 480.51 L475.90 483.32 L474.92 486.18 L473.71 489.04 L472.28 491.85 L470.67 494.56 L468.90 497.14 L466.99 499.52 L464.99 501.67 L462.93 503.56 L460.84 505.16 L458.75 506.42 L456.71 507.34 L454.75 507.90 L452.90 508.09 L271.70 508.09 L270.00 507.90 L268.46 507.34 L267.13 506.42 L266.02 505.16 L265.15 503.56 L264.53 501.67 L264.18 499.52 L264.11 497.14 L264.30 494.56 L264.77 491.85 L265.50 489.04 L266.48 486.18 L267.69 483.32 L269.12 480.51 L270.73 477.80 L272.50 475.22 L274.41 472.84 L276.41 470.69 L278.47 468.80 L280.56 467.20 L282.65 465.94 L284.69 465.02 L286.65 464.46 L288.50 464.27 Z" fill="url(#gg4)" stroke="#0E880E" stroke-width="1"/>
<path d="M461.30 504.83 L463.39 503.17 L465.44 501.22 L467.42 499.01 L469.30 496.58 L471.04 493.98 L472.61 491.24 L473.99 488.41 L475.16 485.55 L476.08 482.69 L476.75 479.90 L477.16 477.21 L477.30 474.68 L477.16 472.34 L476.75 470.24 L476.08 468.42 L475.16 466.90 L473.99 465.70 L472.61 464.86 L471.04 464.38 L469.30 464.28 L467.42 464.55 L465.44 465.19 L463.39 466.19 L461.30 467.53 L459.21 469.19 L457.16 471.14 L455.18 473.35 L453.30 475.78 L451.56 478.38 L449.99 481.12 L448.61 483.95 L447.44 486.81 L446.52 489.67 L445.85 492.46 L445.44 495.15 L445.30 497.68 L445.44 500.02 L445.85 502.12 L446.52 503.94 L447.44 505.46 L448.61 506.66 L449.99 507.50 L451.56 507.98 L453.30 508.08 L455.18 507.81 L457.16 507.17 L459.21 506.17 Z" fill="#2A9A2A" stroke="#0E880E" stroke-width="1"/>
<text x="214.2" y="501.7" text-anchor="middle" font-family="Liberation Sans" font-size="13.5" fill="#111" stroke="#111" stroke-width="0.3" transform="translate(214.2 0) scale(0.78 1) translate(-214.2 0)">0</text>
<text x="354.2" y="501.7" text-anchor="middle" font-family="Liberation Sans" font-size="13.5" fill="#111" stroke="#111" stroke-width="0.3" transform="translate(354.2 0) scale(0.78 1) translate(-354.2 0)">0</text>
<text x="77" y="511.6" font-family="Liberation Sans" font-size="14" fill="#1E1E1E" textLength="65" lengthAdjust="spacing">Country B</text>
<path d="M189.80 511.34 L319.00 511.34 L320.70 511.53 L322.24 512.09 L323.57 513.01 L324.68 514.27 L325.55 515.87 L326.17 517.76 L326.52 519.91 L326.59 522.29 L326.40 524.87 L325.93 527.58 L325.20 530.39 L324.22 533.25 L323.01 536.11 L321.58 538.92 L319.97 541.63 L318.20 544.21 L316.29 546.59 L314.29 548.74 L312.23 550.63 L310.14 552.23 L308.05 553.49 L306.01 554.41 L304.05 554.97 L302.20 555.16 L173.00 555.16 L171.30 554.97 L169.76 554.41 L168.43 553.49 L167.32 552.23 L166.45 550.63 L165.83 548.74 L165.48 546.59 L165.41 544.21 L165.60 541.63 L166.07 538.92 L166.80 536.11 L167.78 533.25 L168.99 530.39 L170.42 527.58 L172.03 524.87 L173.80 522.29 L175.71 519.91 L177.71 517.76 L179.77 515.87 L181.86 514.27 L183.95 513.01 L185.99 512.09 L187.95 511.53 L189.80 511.34 Z" fill="url(#gb5)" stroke="#4C7F96" stroke-width="1"/>
<path d="M319.00 511.34 L590.00 511.34 L591.70 511.53 L593.24 512.09 L594.57 513.01 L595.68 514.27 L596.55 515.87 L597.17 517.76 L597.52 519.91 L597.59 522.29 L597.40 524.87 L596.93 527.58 L596.20 530.39 L595.22 533.25 L594.01 536.11 L592.58 538.92 L590.97 541.63 L589.20 544.21 L587.29 546.59 L585.29 548.74 L583.23 550.63 L581.14 552.23 L579.05 553.49 L577.01 554.41 L575.05 554.97 L573.20 555.16 L302.20 555.16 L300.50 554.97 L298.96 554.41 L297.63 553.49 L296.52 552.23 L295.65 550.63 L295.03 548.74 L294.68 546.59 L294.61 544.21 L294.80 541.63 L295.27 538.92 L296.00 536.11 L296.98 533.25 L298.19 530.39 L299.62 527.58 L301.23 524.87 L303.00 522.29 L304.91 519.91 L306.91 517.76 L308.97 515.87 L311.06 514.27 L313.15 513.01 L315.19 512.09 L317.15 511.53 L319.00 511.34 Z" fill="url(#gg5)" stroke="#0E880E" stroke-width="1"/>
<path d="M581.60 551.90 L583.69 550.24 L585.74 548.29 L587.72 546.08 L589.60 543.65 L591.34 541.05 L592.91 538.31 L594.29 535.48 L595.46 532.62 L596.38 529.76 L597.05 526.97 L597.46 524.28 L597.60 521.75 L597.46 519.41 L597.05 517.31 L596.38 515.49 L595.46 513.97 L594.29 512.77 L592.91 511.93 L591.34 511.45 L589.60 511.35 L587.72 511.62 L585.74 512.26 L583.69 513.26 L581.60 514.60 L579.51 516.26 L577.46 518.21 L575.48 520.42 L573.60 522.85 L571.86 525.45 L570.29 528.19 L568.91 531.02 L567.74 533.88 L566.82 536.74 L566.15 539.53 L565.74 542.22 L565.60 544.75 L565.74 547.09 L566.15 549.19 L566.82 551.01 L567.74 552.53 L568.91 553.73 L570.29 554.57 L571.86 555.05 L573.60 555.15 L575.48 554.88 L577.46 554.24 L579.51 553.24 Z" fill="#2A9A2A" stroke="#0E880E" stroke-width="1"/>
<text x="229.5" y="548.8" text-anchor="middle" font-family="Liberation Sans" font-size="13.5" fill="#111" stroke="#111" stroke-width="0.3" transform="translate(229.5 0) scale(0.78 1) translate(-229.5 0)">0</text>
<text x="429.6" y="548.8" text-anchor="middle" font-family="Liberation Sans" font-size="13.5" fill="#111" stroke="#111" stroke-width="0.3" transform="translate(429.6 0) scale(0.78 1) translate(-429.6 0)">0</text>
<text x="77" y="558.6" font-family="Liberation Sans" font-size="14" fill="#1E1E1E" textLength="65" lengthAdjust="spacing">Country A</text>
<circle cx="26" cy="129" r="2.5" fill="#fff" stroke="#8A8A8A" stroke-width="1"/>
<circle cx="369.5" cy="129" r="2.5" fill="#fff" stroke="#8A8A8A" stroke-width="1"/>
<circle cx="713" cy="129" r="2.5" fill="#fff" stroke="#8A8A8A" stroke-width="1"/>
<circle cx="26" cy="392" r="2.5" fill="#fff" stroke="#8A8A8A" stroke-width="1"/>
<circle cx="713" cy="392" r="2.5" fill="#fff" stroke="#8A8A8A" stroke-width="1"/>
<circle cx="26" cy="656" r="2.5" fill="#fff" stroke="#8A8A8A" stroke-width="1"/>
<circle cx="369.5" cy="656" r="2.5" fill="#fff" stroke="#8A8A8A" stroke-width="1"/>
<circle cx="713" cy="656" r="2.5" fill="#fff" stroke="#8A8A8A" stroke-width="1"/>
<rect x="31" y="125.5" width="9" height="9" rx="1.5" fill="#D8E0F0" stroke="#C0C8D8" stroke-width="0.6"/><path d="M35.5 126.5v7M32 130h7" stroke="#111" stroke-width="0.8"/><circle cx="35.5" cy="127" r="0.9" fill="#111"/><circle cx="35.5" cy="133" r="0.9" fill="#111"/><circle cx="32.5" cy="130" r="0.9" fill="#111"/><circle cx="38.5" cy="130" r="0.9" fill="#111"/>
</svg>
<!--/CHART-->
<div id="props" class="a">
 <div class="a" style="left:0;top:0;width:265px;height:26px;background:#F5CC84"></div>
 <span class="a" style="left:6px;top:6px;font-size:14px;color:#1E1E1E">Properties</span>
 <div class="a" style="left:206px;top:10px;width:0;height:0;border-left:4.4px solid transparent;border-right:4.4px solid transparent;border-top:5.4px solid #77450F"></div>
 <svg class="a" style="left:226px;top:6px" width="10" height="15" viewBox="0 0 10 15"><path d="M2 1.5h6M2.6 1.5v6.5M7.4 1.5v6.5M0.5 8h9M5 8v6" fill="none" stroke="#77450F" stroke-width="1.2"/></svg>
 <svg class="a" style="left:245px;top:8px" width="12" height="11" viewBox="0 0 12 11"><path d="M0.8 0.8l10 9.4M10.8 0.8l-10 9.4" stroke="#77450F" stroke-width="1.4"/></svg>
 <div class="a" style="left:0;top:26px;width:265px;height:25px;background:#F5F7FC"></div>
 <span class="a" style="left:8px;top:31px;font-size:14px;font-weight:bold;color:#1E1E1E">Chart1</span>
 <span class="a" style="left:60px;top:31px;font-size:14px;color:#1E1E1E">Chart</span>
 <div class="a" style="left:247px;top:37px;width:0;height:0;border-left:4px solid transparent;border-right:4px solid transparent;border-top:4px solid #1E1E1E"></div>
 <div class="a" style="left:0;top:50.5px;width:265px;height:29.5px;background:#CCD5F0"></div>
 <div class="a" style="left:2.5px;top:52px;width:27px;height:26px;background:#FDF2C8;border:1px solid #E5C365"></div>
 <svg class="a" style="left:7px;top:57px" width="18" height="17" viewBox="0 0 18 17">
  <rect x="1" y="1.5" width="4" height="4" fill="#fff" stroke="#1E1E1E" stroke-width="1.2"/><path d="M2 3.5h2M3 2.5v2" stroke="#1E1E1E"/>
  <rect x="1" y="10" width="4" height="4" fill="#fff" stroke="#1E1E1E" stroke-width="1.2"/><path d="M2 12h2M3 11v2" stroke="#1E1E1E"/>
  <path d="M7 2h8M7 4.5h6M7 7h8M7 10.5h8M7 13h6M7 15.5h8" stroke="#1E1E1E" stroke-width="1.2"/>
 </svg>
 <svg class="a" style="left:35px;top:56px" width="20" height="20" viewBox="0 0 20 20">
  <rect x="1" y="1" width="8" height="8" fill="#333"/><text x="2" y="8" font-size="8" font-weight="bold" fill="#fff" font-family="Liberation Sans">A</text>
  <text x="1.5" y="18" font-size="9" font-weight="bold" fill="#1E1E1E" font-family="Liberation Sans">Z</text>
  <path d="M14.5 4v12M11 12.5l3.5 3.5 3.5-3.5" fill="none" stroke="#1F62B8" stroke-width="1.8"/>
 </svg>
 <div class="a" style="left:59px;top:54px;width:1px;height:24px;background:#B5BEDA"></div>
 <svg class="a" style="left:64.5px;top:55px" width="19" height="18" viewBox="0 0 19 18">
  <path d="M2 16.5L9.5 9" stroke="#222" stroke-width="3.2" stroke-linecap="round"/>
  <path d="M9 9.5a5 5 0 0 1 7.5-6.5l-3.5 3 1 1.5 1.5 1 3-3.5a5 5 0 0 1-6.5 7.5z" fill="#222"/>
 </svg>
 <div class="a" style="left:0;top:80px;width:244px;height:521px;background:#EEEEF3"></div>
 <div class="a" style="left:15px;top:81.1px;width:229px;height:20.8px;background:#F7F9FD;border-bottom:1px solid #EAEEF6"></div>
 <div class="a" style="left:121.5px;top:81.1px;width:1px;height:20.8px;background:#EAEEF6"></div>
 <div class="a" style="left:19px;top:84.6px;width:102px;height:18px;overflow:hidden;white-space:nowrap;font-size:14px;color:#1E1E1E">CategoryGroups</div>
 <span class="a" style="left:124.5px;top:84.6px;font-size:14px;font-weight:normal;color:#1E1E1E;white-space:nowrap">(Collection)</span>
 <div class="a" style="left:15px;top:101.9px;width:229px;height:20.8px;background:#F7F9FD;border-bottom:1px solid #EAEEF6"></div>
 <div class="a" style="left:121.5px;top:101.9px;width:1px;height:20.8px;background:#EAEEF6"></div>
 <div class="a" style="left:19px;top:105.4px;width:102px;height:18px;overflow:hidden;white-space:nowrap;font-size:14px;color:#1E1E1E">ChartAreas</div>
 <span class="a" style="left:124.5px;top:105.4px;font-size:14px;font-weight:normal;color:#1E1E1E;white-space:nowrap">(Collection)</span>
 <div class="a" style="left:15px;top:122.7px;width:229px;height:20.8px;background:#F7F9FD;border-bottom:1px solid #EAEEF6"></div>
 <div class="a" style="left:121.5px;top:122.7px;width:1px;height:20.8px;background:#EAEEF6"></div>
 <div class="a" style="left:19px;top:126.2px;width:102px;height:18px;overflow:hidden;white-space:nowrap;font-size:14px;color:#1E1E1E">CustomPaletteColors</div>
 <span class="a" style="left:124.5px;top:126.2px;font-size:14px;font-weight:normal;color:#1E1E1E;white-space:nowrap">(Collection)</span>
 <div class="a" style="left:15px;top:143.5px;width:229px;height:20.8px;background:#F7F9FD;border-bottom:1px solid #EAEEF6"></div>
 <div class="a" style="left:121.5px;top:143.5px;width:1px;height:20.8px;background:#EAEEF6"></div>
 <div class="a" style="left:19px;top:147.0px;width:102px;height:18px;overflow:hidden;white-space:nowrap;font-size:14px;color:#1E1E1E">DynamicHeight</div>
 <div class="a" style="left:15px;top:164.3px;width:229px;height:20.8px;background:#F7F9FD;border-bottom:1px solid #EAEEF6"></div>
 <div class="a" style="left:121.5px;top:164.3px;width:1px;height:20.8px;background:#EAEEF6"></div>
 <div class="a" style="left:19px;top:167.8px;width:102px;height:18px;overflow:hidden;white-space:nowrap;font-size:14px;color:#1E1E1E">DynamicWidth</div>
 <div class="a" style="left:15px;top:185.1px;width:229px;height:20.8px;background:#F7F9FD;border-bottom:1px solid #EAEEF6"></div>
 <div class="a" style="left:121.5px;top:185.1px;width:1px;height:20.8px;background:#EAEEF6"></div>
 <div class="a" style="left:19px;top:188.6px;width:102px;height:18px;overflow:hidden;white-space:nowrap;font-size:14px;color:#1E1E1E">Legends</div>
 <span class="a" style="left:124.5px;top:188.6px;font-size:14px;font-weight:normal;color:#1E1E1E;white-space:nowrap">(Collection)</span>
 <div class="a" style="left:15px;top:205.9px;width:229px;height:20.8px;background:#F7F9FD;border-bottom:1px solid #EAEEF6"></div>
 <div class="a" style="left:121.5px;top:205.9px;width:1px;height:20.8px;background:#EAEEF6"></div>
 <div class="a" style="left:19px;top:209.4px;width:102px;height:18px;overflow:hidden;white-space:nowrap;font-size:14px;color:#1E1E1E">NoDataMessage</div>
 <div class="a" style="left:4px;top:210.9px;width:11px;height:11px;border:1px solid #9A9DA8;background:#F5F7FC"></div><div class="a" style="left:6.5px;top:215.9px;width:6px;height:1px;background:#5A5D68"></div><div class="a" style="left:9px;top:213.4px;width:1px;height:6px;background:#5A5D68"></div>
 <div class="a" style="left:15px;top:226.7px;width:107px;height:20.8px;background:#1A74D2"></div>
 <div class="a" style="left:122px;top:226.7px;width:122px;height:20.8px;background:#F5F7FC"></div>
 <div class="a" style="left:19px;top:230.2px;width:102px;height:18px;overflow:hidden;white-space:nowrap;font-size:14px;color:#fff">Palette</div>
 <div class="a" style="left:15px;top:247.5px;width:229px;height:20.8px;background:#F7F9FD;border-bottom:1px solid #EAEEF6"></div>
 <div class="a" style="left:121.5px;top:247.5px;width:1px;height:20.8px;background:#EAEEF6"></div>
 <div class="a" style="left:19px;top:251.0px;width:102px;height:18px;overflow:hidden;white-space:nowrap;font-size:14px;color:#1E1E1E">PalettePattern</div>
 <div class="a" style="left:15px;top:268.3px;width:229px;height:20.8px;background:#F7F9FD;border-bottom:1px solid #EAEEF6"></div>
 <div class="a" style="left:121.5px;top:268.3px;width:1px;height:20.8px;background:#EAEEF6"></div>
 <div class="a" style="left:19px;top:271.8px;width:102px;height:18px;overflow:hidden;white-space:nowrap;font-size:14px;color:#1E1E1E">SeriesGroups</div>
 <div class="a" style="left:15px;top:289.1px;width:229px;height:20.8px;background:#F7F9FD;border-bottom:1px solid #EAEEF6"></div>
 <div class="a" style="left:121.5px;top:289.1px;width:1px;height:20.8px;background:#EAEEF6"></div>
 <div class="a" style="left:19px;top:292.6px;width:102px;height:18px;overflow:hidden;white-space:nowrap;font-size:14px;color:#1E1E1E">Titles</div>
 <div class="a" style="left:0;top:309.9px;width:244px;height:20.8px;background:#EEEEF3"></div>
 <div class="a" style="left:4px;top:314.9px;width:11px;height:11px;border:1px solid #9A9DA8;background:#F5F7FC"></div><div class="a" style="left:6.5px;top:319.9px;width:6px;height:1px;background:#5A5D68"></div>
 <span class="a" style="left:19px;top:313.4px;font-size:14px;font-weight:bold;color:#1E1E1E">Data Only</span>
 <div class="a" style="left:15px;top:330.7px;width:229px;height:20.8px;background:#F7F9FD;border-bottom:1px solid #EAEEF6"></div>
 <div class="a" style="left:121.5px;top:330.7px;width:1px;height:20.8px;background:#EAEEF6"></div>
 <div class="a" style="left:19px;top:334.2px;width:102px;height:18px;overflow:hidden;white-space:nowrap;font-size:14px;color:#1E1E1E">DataElementName</div>
 <div class="a" style="left:15px;top:351.5px;width:229px;height:20.8px;background:#F7F9FD;border-bottom:1px solid #EAEEF6"></div>
 <div class="a" style="left:121.5px;top:351.5px;width:1px;height:20.8px;background:#EAEEF6"></div>
 <div class="a" style="left:19px;top:355.0px;width:102px;height:18px;overflow:hidden;white-space:nowrap;font-size:14px;color:#1E1E1E">DataElementOutput</div>
 <div class="a" style="left:15px;top:372.3px;width:229px;height:20.8px;background:#F7F9FD;border-bottom:1px solid #EAEEF6"></div>
 <div class="a" style="left:121.5px;top:372.3px;width:1px;height:20.8px;background:#EAEEF6"></div>
 <div class="a" style="left:19px;top:375.8px;width:102px;height:18px;overflow:hidden;white-space:nowrap;font-size:14px;color:#1E1E1E">DataSetName</div>
 <div class="a" style="left:0;top:393.1px;width:244px;height:20.8px;background:#EEEEF3"></div>
 <div class="a" style="left:4px;top:398.1px;width:11px;height:11px;border:1px solid #9A9DA8;background:#F5F7FC"></div><div class="a" style="left:6.5px;top:403.1px;width:6px;height:1px;background:#5A5D68"></div>
 <span class="a" style="left:19px;top:396.6px;font-size:14px;font-weight:bold;color:#1E1E1E">Fill</span>
 <div class="a" style="left:15px;top:413.9px;width:229px;height:20.8px;background:#F7F9FD;border-bottom:1px solid #EAEEF6"></div>
 <div class="a" style="left:121.5px;top:413.9px;width:1px;height:20.8px;background:#EAEEF6"></div>
 <div class="a" style="left:19px;top:417.4px;width:102px;height:18px;overflow:hidden;white-space:nowrap;font-size:14px;color:#1E1E1E">BackgroundColor</div>
 <div class="a" style="left:15px;top:434.7px;width:229px;height:20.8px;background:#F7F9FD;border-bottom:1px solid #EAEEF6"></div>
 <div class="a" style="left:121.5px;top:434.7px;width:1px;height:20.8px;background:#EAEEF6"></div>
 <div class="a" style="left:19px;top:438.2px;width:102px;height:18px;overflow:hidden;white-space:nowrap;font-size:14px;color:#1E1E1E">BackgroundGradientEndColor</div>
 <div class="a" style="left:15px;top:455.5px;width:229px;height:20.8px;background:#F7F9FD;border-bottom:1px solid #EAEEF6"></div>
 <div class="a" style="left:121.5px;top:455.5px;width:1px;height:20.8px;background:#EAEEF6"></div>
 <div class="a" style="left:19px;top:459.0px;width:102px;height:18px;overflow:hidden;white-space:nowrap;font-size:14px;color:#1E1E1E">BackgroundGradientType</div>
 <div class="a" style="left:15px;top:476.3px;width:229px;height:20.8px;background:#F7F9FD;border-bottom:1px solid #EAEEF6"></div>
 <div class="a" style="left:121.5px;top:476.3px;width:1px;height:20.8px;background:#EAEEF6"></div>
 <div class="a" style="left:19px;top:479.8px;width:102px;height:18px;overflow:hidden;white-space:nowrap;font-size:14px;color:#1E1E1E">BackgroundImage</div>
 <div class="a" style="left:4px;top:481.3px;width:11px;height:11px;border:1px solid #9A9DA8;background:#F5F7FC"></div><div class="a" style="left:6.5px;top:486.3px;width:6px;height:1px;background:#5A5D68"></div><div class="a" style="left:9px;top:483.8px;width:1px;height:6px;background:#5A5D68"></div>
 <div class="a" style="left:15px;top:497.1px;width:229px;height:20.8px;background:#F7F9FD;border-bottom:1px solid #EAEEF6"></div>
 <div class="a" style="left:121.5px;top:497.1px;width:1px;height:20.8px;background:#EAEEF6"></div>
 <div class="a" style="left:19px;top:500.6px;width:102px;height:18px;overflow:hidden;white-space:nowrap;font-size:14px;color:#1E1E1E">BackgroundPatternType</div>
 <div class="a" style="left:0;top:517.9px;width:244px;height:20.8px;background:#EEEEF3"></div>
 <div class="a" style="left:4px;top:522.9px;width:11px;height:11px;border:1px solid #9A9DA8;background:#F5F7FC"></div><div class="a" style="left:6.5px;top:527.9px;width:6px;height:1px;background:#5A5D68"></div>
 <span class="a" style="left:19px;top:521.4px;font-size:14px;font-weight:bold;color:#1E1E1E">Filters</span>
 <div class="a" style="left:15px;top:538.7px;width:229px;height:20.8px;background:#F7F9FD;border-bottom:1px solid #EAEEF6"></div>
 <div class="a" style="left:121.5px;top:538.7px;width:1px;height:20.8px;background:#EAEEF6"></div>
 <div class="a" style="left:19px;top:542.2px;width:102px;height:18px;overflow:hidden;white-space:nowrap;font-size:14px;color:#1E1E1E">Filters</div>
 <div class="a" style="left:0;top:559.5px;width:244px;height:20.8px;background:#EEEEF3"></div>
 <div class="a" style="left:4px;top:564.5px;width:11px;height:11px;border:1px solid #9A9DA8;background:#F5F7FC"></div><div class="a" style="left:6.5px;top:569.5px;width:6px;height:1px;background:#5A5D68"></div>
 <span class="a" style="left:19px;top:563.0px;font-size:14px;font-weight:bold;color:#1E1E1E">General</span>
 <div class="a" style="left:15px;top:580.3px;width:229px;height:20.8px;background:#F7F9FD;border-bottom:1px solid #EAEEF6"></div>
 <div class="a" style="left:121.5px;top:580.3px;width:1px;height:20.8px;background:#EAEEF6"></div>
 <div class="a" style="left:19px;top:583.8px;width:102px;height:18px;overflow:hidden;white-space:nowrap;font-size:14px;color:#1E1E1E">Name</div>
 <span class="a" style="left:124.5px;top:583.8px;font-size:14px;font-weight:bold;color:#1E1E1E;white-space:nowrap">Chart1</span>
 <div class="a" style="left:0;top:603px;width:265px;height:53px;background:#F7F9FD"></div>
 <span class="a" style="left:8px;top:613px;font-size:14px;font-weight:bold;color:#1E1E1E">Palette</span>
 <span class="a" style="left:8px;top:634px;font-size:14px;color:#1E1E1E;letter-spacing:0.2px">Colors palette.</span>
 <div class="a" style="left:244px;top:80px;width:21px;height:523px;background:#E8EAF0"></div>
 <div class="a" style="left:249px;top:88px;width:0;height:0;border-left:6px solid transparent;border-right:6px solid transparent;border-bottom:6px solid #7A85AC"></div>
 <div class="a" style="left:249px;top:149px;width:11px;height:205px;background:#C2C3C9"></div>
 <div class="a" style="left:249px;top:589px;width:0;height:0;border-left:6px solid transparent;border-right:6px solid transparent;border-top:6px solid #6C78A2"></div>
</div>
<div class="a" style="left:879px;top:276.0px;width:24px;height:18px;border:1px solid #8C8C8C;display:flex;overflow:hidden"><div style="flex:1;background:#9ACDE3"></div><div style="flex:1;background:#9ACDE3"></div><div style="flex:1;background:#A040D0"></div><div style="flex:1;background:#5A7A9A"></div><div style="flex:1;background:#50E0E0"></div><div style="flex:1;background:#E0C090"></div><div style="flex:1;background:#E0C090"></div><div style="flex:1;background:#90C890"></div></div>
<span class="a" style="left:911px;top:278px;font-size:14px;font-weight:bold;color:#1E1E1E;letter-spacing:-0.2px">Pastel</span>
<div class="a" style="left:980px;top:275px;width:20px;height:20px;background:#E4E6EC;border:1px solid #C8CBD4"></div>
<svg class="a" style="left:984px;top:281px" width="12" height="8" viewBox="0 0 12 8"><path d="M1.5 1.5L6 6l4.5-4.5" fill="none" stroke="#555" stroke-width="1.1"/></svg>
<div class="a" style="left:856px;top:295.5px;width:144px;height:278px;background:#fff;border:1px solid #A7ABB5"></div>
<div class="a" style="left:858px;top:297px;width:25px;height:19px;background:#fff;border:1px solid #ABADB3"></div>
<span class="a" style="left:862px;top:299px;font-size:13px;color:#1E1E1E">fx</span>
<span class="a" style="left:886px;top:300px;font-size:14px;color:#1E1E1E;letter-spacing:-0.3px">&lt;Expression...&gt;</span>
<div class="a" style="left:980px;top:296.5px;width:19px;height:256.5px;background:#F0F0F3"></div>
<svg class="a" style="left:985px;top:303px" width="10" height="7" viewBox="0 0 10 7"><path d="M1 5.5L5 1.5l4 4" fill="none" stroke="#333" stroke-width="1.2"/></svg>
<div class="a" style="left:981px;top:316px;width:17px;height:152px;background:#C2C3C9"></div>
<svg class="a" style="left:985px;top:539px" width="10" height="7" viewBox="0 0 10 7"><path d="M1 1.5L5 5.5l4-4" fill="none" stroke="#333" stroke-width="1.2"/></svg>
<div class="a" style="left:858px;top:318.9px;width:25px;height:18px;border:1px solid #8C8C8C;display:flex;overflow:hidden"><div style="flex:1;background:#1F9A1F"></div><div style="flex:1;background:#1F9A1F"></div><div style="flex:1;background:#5A6A8A"></div><div style="flex:1;background:#C040D0"></div><div style="flex:1;background:#C040D0"></div><div style="flex:1;background:#FFE000"></div><div style="flex:1;background:#50E0E0"></div><div style="flex:1;background:#6A2A10"></div></div>
<div class="a" style="left:886px;top:320.9px;width:94px;overflow:hidden;white-space:nowrap;font-size:14px;color:#1E1E1E">Default</div>
<div class="a" style="left:858px;top:340.3px;width:25px;height:18px;border:1px solid #8C8C8C;display:flex;overflow:hidden"><div style="flex:1;background:#C08850"></div><div style="flex:1;background:#9A6A3A"></div><div style="flex:1;background:#C08850"></div><div style="flex:1;background:#C08850"></div><div style="flex:1;background:#1F9A1F"></div><div style="flex:1;background:#C08850"></div><div style="flex:1;background:#B07A45"></div><div style="flex:1;background:#D8A868"></div></div>
<div class="a" style="left:886px;top:342.3px;width:94px;overflow:hidden;white-space:nowrap;font-size:14px;color:#1E1E1E">EarthTones</div>
<div class="a" style="left:858px;top:361.7px;width:25px;height:18px;border:1px solid #8C8C8C;display:flex;overflow:hidden"><div style="flex:1;background:#7FA8E0"></div><div style="flex:1;background:#FFF5D0"></div><div style="flex:1;background:#1A2A5A"></div><div style="flex:1;background:#555A70"></div><div style="flex:1;background:#1E70D0"></div><div style="flex:1;background:#1A3A80"></div><div style="flex:1;background:#1A3A80"></div><div style="flex:1;background:#FFE000"></div></div>
<div class="a" style="left:886px;top:363.7px;width:94px;overflow:hidden;white-space:nowrap;font-size:14px;color:#1E1E1E">Excel</div>
<div class="a" style="left:858px;top:383.1px;width:25px;height:18px;border:1px solid #8C8C8C;display:flex;overflow:hidden"><div style="flex:1;background:#C8C8C8"></div><div style="flex:1;background:#B8B8B8"></div><div style="flex:1;background:#A0A0A0"></div><div style="flex:1;background:#909090"></div><div style="flex:1;background:#888888"></div><div style="flex:1;background:#707070"></div><div style="flex:1;background:#606060"></div><div style="flex:1;background:#555555"></div></div>
<div class="a" style="left:886px;top:385.1px;width:94px;overflow:hidden;white-space:nowrap;font-size:14px;color:#1E1E1E">GrayScale</div>
<div class="a" style="left:858px;top:404.5px;width:25px;height:18px;border:1px solid #8C8C8C;display:flex;overflow:hidden"><div style="flex:1;background:#E8F0F8"></div><div style="flex:1;background:#F4F6FA"></div><div style="flex:1;background:#F8F0D8"></div><div style="flex:1;background:#F8E8C0"></div><div style="flex:1;background:#FFF8E0"></div><div style="flex:1;background:#F4F0E8"></div><div style="flex:1;background:#F0F0F0"></div><div style="flex:1;background:#F8F8F8"></div></div>
<div class="a" style="left:886px;top:406.5px;width:94px;overflow:hidden;white-space:nowrap;font-size:14px;color:#1E1E1E">Light</div>
<div class="a" style="left:857px;top:424.9px;width:123px;height:21px;background:#1A74D2"></div>
<div class="a" style="left:858px;top:425.9px;width:25px;height:18px;border:1px solid #8C8C8C;display:flex;overflow:hidden"><div style="flex:1;background:#9ACDE3"></div><div style="flex:1;background:#9ACDE3"></div><div style="flex:1;background:#A040D0"></div><div style="flex:1;background:#5A7A9A"></div><div style="flex:1;background:#50E0E0"></div><div style="flex:1;background:#E0C090"></div><div style="flex:1;background:#E0C090"></div><div style="flex:1;background:#90C890"></div></div>
<div class="a" style="left:886px;top:427.9px;width:94px;overflow:hidden;white-space:nowrap;font-size:14px;color:#fff">Pastel</div>
<div class="a" style="left:858px;top:447.3px;width:25px;height:18px;border:1px solid #8C8C8C;display:flex;overflow:hidden"><div style="flex:1;background:#C08850"></div><div style="flex:1;background:#6060C0"></div><div style="flex:1;background:#60E0E0"></div><div style="flex:1;background:#60E0E0"></div><div style="flex:1;background:#D8A868"></div><div style="flex:1;background:#D8D8D8"></div><div style="flex:1;background:#D8D8D8"></div><div style="flex:1;background:#F8F0C8"></div></div>
<div class="a" style="left:886px;top:449.3px;width:94px;overflow:hidden;white-space:nowrap;font-size:14px;color:#1E1E1E">SemiTransparent</div>
<div class="a" style="left:858px;top:468.7px;width:25px;height:18px;border:1px solid #8C8C8C;display:flex;overflow:hidden"><div style="flex:1;background:#C040E0"></div><div style="flex:1;background:#C040E0"></div><div style="flex:1;background:#3060D0"></div><div style="flex:1;background:#C040E0"></div><div style="flex:1;background:#B03060"></div><div style="flex:1;background:#C040E0"></div><div style="flex:1;background:#3060E0"></div><div style="flex:1;background:#C040E0"></div></div>
<div class="a" style="left:886px;top:470.7px;width:94px;overflow:hidden;white-space:nowrap;font-size:14px;color:#1E1E1E">Berry</div>
<div class="a" style="left:858px;top:490.1px;width:25px;height:18px;border:1px solid #8C8C8C;display:flex;overflow:hidden"><div style="flex:1;background:#C08850"></div><div style="flex:1;background:#A07040"></div><div style="flex:1;background:#6A1A10"></div><div style="flex:1;background:#C08850"></div><div style="flex:1;background:#C08850"></div><div style="flex:1;background:#A03050"></div><div style="flex:1;background:#C08850"></div><div style="flex:1;background:#C08850"></div></div>
<div class="a" style="left:886px;top:492.1px;width:94px;overflow:hidden;white-space:nowrap;font-size:14px;color:#1E1E1E">Chocolate</div>
<div class="a" style="left:858px;top:511.5px;width:25px;height:18px;border:1px solid #8C8C8C;display:flex;overflow:hidden"><div style="flex:1;background:#FFE000"></div><div style="flex:1;background:#A02060"></div><div style="flex:1;background:#C040C0"></div><div style="flex:1;background:#A02060"></div><div style="flex:1;background:#A02060"></div><div style="flex:1;background:#C08850"></div><div style="flex:1;background:#C040C0"></div><div style="flex:1;background:#C040C0"></div></div>
<div class="a" style="left:886px;top:513.5px;width:94px;overflow:hidden;white-space:nowrap;font-size:14px;color:#1E1E1E">Fire</div>
<div class="a" style="left:858px;top:532.9px;width:25px;height:18px;border:1px solid #8C8C8C;display:flex;overflow:hidden"><div style="flex:1;background:#2E8B57"></div><div style="flex:1;background:#88C0A0"></div><div style="flex:1;background:#4070B0"></div><div style="flex:1;background:#6090D0"></div><div style="flex:1;background:#4070B0"></div><div style="flex:1;background:#88C0A0"></div><div style="flex:1;background:#40A060"></div><div style="flex:1;background:#40A060"></div></div>
<div class="a" style="left:886px;top:534.9px;width:94px;overflow:hidden;white-space:nowrap;font-size:14px;color:#1E1E1E">SeaGreen</div>
<div class="a" style="left:857px;top:553px;width:142px;height:20px;background:#F5F7FC;border-top:1px solid #DADDE5"></div>
<svg class="a" style="left:857px;top:554px" width="20" height="19" viewBox="0 0 20 19"><path d="M0 1L18 19M0 4L15 19M0 7L12 19M0 10L9 19M0 13L6 19M0 16L3 19" stroke="#7A86B0" stroke-width="0.8"/></svg>
</body></html>
